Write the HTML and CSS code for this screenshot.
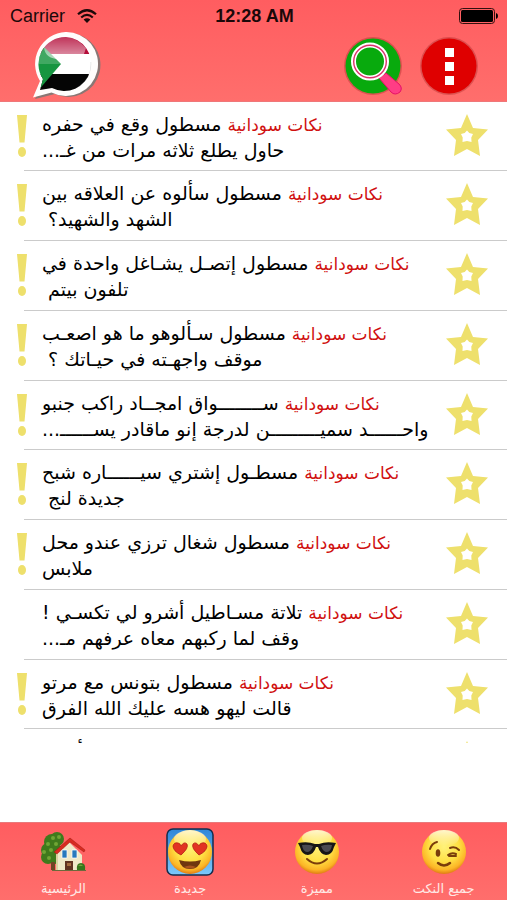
FILE: index.html
```html
<!DOCTYPE html>
<html lang="ar">
<head>
<meta charset="utf-8">
<meta name="viewport" content="width=device-width, initial-scale=1">
<title>نكات سودانية</title>
<link rel="stylesheet" href="styles.css">
</head>
<body>
<svg class="defs" aria-hidden="true">
  <defs>
    <radialGradient id="face" cx="50%" cy="38%" r="62%">
      <stop offset="0" stop-color="#fff27a"/><stop offset=".55" stop-color="#ffe044"/><stop offset=".85" stop-color="#fcb526"/><stop offset="1" stop-color="#e07b14"/>
    </radialGradient>
    <linearGradient id="shine" x1="0" y1="0" x2="0" y2="1">
      <stop offset="0" stop-color="#fff" stop-opacity=".75"/><stop offset="1" stop-color="#fff" stop-opacity="0"/>
    </linearGradient>
    <linearGradient id="sky" x1="0" y1="0" x2="0" y2="1">
      <stop offset="0" stop-color="#2f86d8"/><stop offset="1" stop-color="#7cc8fb"/>
    </linearGradient>
    <linearGradient id="gloss" x1="0" y1="0" x2="0" y2="1">
      <stop offset="0" stop-color="#fff" stop-opacity=".15"/><stop offset="1" stop-color="#fff" stop-opacity=".6"/>
    </linearGradient>
    <symbol id="star" viewBox="0 0 42 42">
      <path fill="#eee06c" fill-rule="evenodd" d="M21 0 27 14 42 15.500 32 26 34 42 21 35 8 42 10 26 0 15.500 15 14ZM21 16.500 18.700 19 15 20 16.700 23.500 16.500 28 21 27 25.500 28 25.300 23.500 27 20 23.300 19Z"/>
    </symbol>
    <symbol id="mark" viewBox="0 0 12 42">
      <path fill="#eee06c" d="M1 0H11L8.500 27.500H3.500Z"/><ellipse cx="6" cy="37" rx="4" ry="5" fill="#eee06c"/>
    </symbol>
  </defs>
</svg>
<div class="app">
  <header class="top">
    <div class="status">
      <div class="carrier">Carrier
        <svg width="20" height="14" viewBox="0 0 20 14" fill="none" stroke="#1b0809" stroke-width="2.200"><path d="M1 5.300Q10-2.800 19 5.300M4.200 8.500Q10 3.400 15.800 8.500"/><path fill="#1b0809" stroke="none" d="M6.600 10.500Q10 7.800 13.400 10.500L10 14Z"/></svg>
      </div>
      <div class="clock">12:28 AM</div>
      <svg class="battery" width="40" height="16" viewBox="0 0 40 16"><rect x=".5" y=".5" width="35" height="15" rx="3" fill="none" stroke="#32100f"/><rect x="2" y="2" width="32" height="12" rx="1.500"/><path d="M37 5q2 .5 2 3t-2 3z"/></svg>
    </div>
    <div class="actions">
      <button class="icon-button flag" aria-label="السودان">
        <svg width="72" height="68" viewBox="0 0 72 68">
          <clipPath id="flagclip"><path d="M34 5A27 27 0 1 1 20 56L8 58 11 47A27 27 0 0 1 34 5Z"/></clipPath>
          <path fill="#8a7774" d="M38 1a32 32 0 1 1-15 61L3 67 12 49A32 32 0 0 1 38 1Z"/>
          <path fill="#fffdfc" d="M33.500 0a32 32 0 1 1-14 60.500L1 65.500 8 49A32 32 0 0 1 33.500 0Z"/>
          <g clip-path="url(#flagclip)">
            <path fill="#fff" d="M0 0H72V68H0Z"/><path fill="#b40d3a" d="M0 0H72V22H0Z"/><path fill="#050505" d="M0 42H72V68H0Z"/><path fill="#169540" d="M5 8 29 32 5 60Z"/>
            <path fill="url(#gloss)" d="M12 14Q33-6 54 16L52 22H28L24 27Q12 25 12 14Z"/>
            <path fill="#fff" opacity=".18" d="M5 32H29L5 8Z"/>
            <path fill="none" stroke="#aaa" stroke-opacity=".35" stroke-width="3" d="M60 30Q61 47 47 56"/>
          </g>
        </svg>
      </button>
      <button class="icon-button search" aria-label="بحث">
        <svg width="62" height="62" viewBox="0 0 62 62">
          <circle cx="31" cy="31" r="29" fill="#8d1716" opacity=".3"/><circle cx="31" cy="31" r="27.500" fill="#08aa0d"/>
          <path fill="#ff3d85" stroke="#e61068" d="M37 43 44 38 57 49Q61 53 58 57 53 61 49 57Z"/>
          <circle cx="28" cy="26.500" r="16.500" fill="none" stroke="#fff" stroke-width="5"/><circle cx="28" cy="26.500" r="16.300" fill="none" stroke="#db316b" stroke-width="1.400"/>
        </svg>
      </button>
      <button class="icon-button menu" aria-label="القائمة">
        <svg width="60" height="62" viewBox="0 0 60 62"><circle cx="30" cy="31" r="29" fill="#8d1716" opacity=".3"/><circle cx="30" cy="31" r="27.500" fill="#df0000"/><path fill="#fff" d="M26 13h9v9h-9zM26 27h9v9h-9zM26 41h9v9h-9z"/></svg>
      </button>
    </div>
  </header>
  <main>
    <ul class="jokes">
      <li><svg class="mark"><use href="#mark"/></svg><div class="text"><p><b>نكات سودانية</b> مسطول وقع في حفره</p><p>حاول يطلع ثلاثه مرات من غـ...</p></div><button class="fav" aria-label="مفضلة"><svg class="star"><use href="#star"/></svg></button></li>
      <li><svg class="mark"><use href="#mark"/></svg><div class="text"><p><b>نكات سودانية</b> مسطول سألوه عن العلاقه بين</p><p>الشهد والشهيد؟&nbsp;</p></div><button class="fav" aria-label="مفضلة"><svg class="star"><use href="#star"/></svg></button></li>
      <li><svg class="mark"><use href="#mark"/></svg><div class="text"><p><b>نكات سودانية</b> مسطول إتصـل يشـاغل واحدة في</p><p>تلفون بيتم&nbsp;</p></div><button class="fav" aria-label="مفضلة"><svg class="star"><use href="#star"/></svg></button></li>
      <li><svg class="mark"><use href="#mark"/></svg><div class="text"><p><b>نكات سودانية</b> مسطول سـألوهو ما هو اصعـب</p><p>موقف واجهـته في حيـاتك ؟&nbsp;</p></div><button class="fav" aria-label="مفضلة"><svg class="star"><use href="#star"/></svg></button></li>
      <li><svg class="mark"><use href="#mark"/></svg><div class="text"><p><b>نكات سودانية</b> ســــــــواق امجــاد راكب جنبو</p><p>واحــــــد سميـــــــــن لدرجة إنو ماقادر يســــــ...</p></div><button class="fav" aria-label="مفضلة"><svg class="star"><use href="#star"/></svg></button></li>
      <li><svg class="mark"><use href="#mark"/></svg><div class="text"><p><b>نكات سودانية</b> مسطـول إشتري سيــــــاره شبح</p><p>جديدة لنج&nbsp;</p></div><button class="fav" aria-label="مفضلة"><svg class="star"><use href="#star"/></svg></button></li>
      <li><svg class="mark"><use href="#mark"/></svg><div class="text"><p><b>نكات سودانية</b> مسطول شغال ترزي عندو محل</p><p>ملابس</p></div><button class="fav" aria-label="مفضلة"><svg class="star"><use href="#star"/></svg></button></li>
      <li class="read"><svg class="mark"><use href="#mark"/></svg><div class="text"><p><b>نكات سودانية</b> تلاتة مسـاطيل أشرو لي تكسـي !</p><p>وقف لما ركبهم معاه عرفهم مـ...</p></div><button class="fav" aria-label="مفضلة"><svg class="star"><use href="#star"/></svg></button></li>
      <li><svg class="mark"><use href="#mark"/></svg><div class="text"><p><b>نكات سودانية</b> مسطول بتونس مع مرتو</p><p>قالت ليهو هسه عليك الله الفرق</p></div><button class="fav" aria-label="مفضلة"><svg class="star"><use href="#star"/></svg></button></li>
      <li class="read"><svg class="mark"><use href="#mark"/></svg><div class="text"><p><b>نكات سودانية</b> تلاتة أشرو</p></div><button class="fav" aria-label="مفضلة"><svg class="star"><use href="#star"/></svg></button></li>
    </ul>
  </main>
  <nav class="tabs">
    <a href="#home">
      <svg width="48" height="48" viewBox="0 0 48 48">
        <g fill="#3f7a1c"><circle cx="13" cy="14" r="8"/><circle cx="18" cy="11" r="7"/><circle cx="9" cy="22" r="7"/><circle cx="16" cy="26" r="10"/><circle cx="9" cy="29" r="7"/></g>
        <g fill="#70a535"><circle cx="14" cy="10" r="2"/><circle cx="20" cy="9" r="2"/><circle cx="9" cy="16" r="2"/><circle cx="17" cy="16" r="2"/><circle cx="5" cy="24" r="2"/><circle cx="12" cy="22" r="2"/><circle cx="10" cy="30" r="2"/></g>
        <path fill="#6f4425" d="M12 34h4v8h-4z"/><path fill="#efe9c8" d="M17 26 30 14 43 27V42H17Z"/><path fill="#d9cf9f" d="M17 26h2v16h-2z"/>
        <path fill="#d82b20" stroke="#9d1913" stroke-width=".5" d="M31 10 46 22 45 24 31 14 18 26 15 24Z"/>
        <path fill="#2779bd" stroke="#fff" stroke-width=".7" d="M23 22h5v8h-5zM33 22h5v8h-5z"/><path fill="#603321" d="M26 33h8v9h-8z"/><path fill="#a46c40" d="M28 35h4v3h-4z"/>
        <path fill="#37771d" d="M38 42Q37 35 42 35 47 35 46 42Z"/><path fill="#73a83b" d="M39 38q3-3 5 0z"/><path stroke="#6c6a3b" d="M13 42.500H47"/>
      </svg>
      <span>الرئيسية</span>
    </a>
    <a href="#new" aria-current="page">
      <svg width="48" height="48" viewBox="0 0 48 48"><rect x="1" y="1" width="46" height="46" rx="6" fill="url(#sky)" stroke="#142c4c" stroke-width="1.500"/><circle cx="24" cy="24" r="22" fill="url(#face)"/><ellipse cx="24" cy="11" rx="16" ry="9" fill="url(#shine)"/>
        <path fill="#e23322" stroke="#b51e15" stroke-width=".8" d="M15 27Q7 23 7 18 8 14 12 15 14 15 15 18 18 13 21 16 23 20 15 27Z"/><path fill="#e23322" stroke="#b51e15" stroke-width=".8" d="M33 27Q41 23 41 18 40 14 36 15 34 15 33 18 30 13 27 16 25 20 33 27Z"/><path fill="#70370f" d="M13 32Q24 35 35 32 33 41 24 41 15 41 13 32Z"/><path fill="#a9531f" d="M18 39Q24 36 30 39 24 42 18 39Z"/></svg>
      <span>جديدة</span>
    </a>
    <a href="#featured">
      <svg width="48" height="48" viewBox="0 0 48 48"><circle cx="24" cy="24" r="22" fill="url(#face)"/><ellipse cx="24" cy="10" rx="15" ry="8" fill="url(#shine)"/><path fill="#161616" d="M5 15Q15 13 22 16H26Q33 13 43 15L41 19Q39 27 33 27 27 26 25 19H23Q21 26 15 27 9 27 7 19Z"/><path fill="#4a4a50" d="M9 17Q15 16 20 18 18 24 14 24 10 24 9 17ZM28 18Q33 16 39 17 38 24 34 24 30 24 28 18Z"/><path fill="none" stroke="#7a3d0b" stroke-width="2" stroke-linecap="round" d="M14 31Q24 40 34 31"/></svg>
      <span>مميزة</span>
    </a>
    <a href="#all">
      <svg width="48" height="48" viewBox="0 0 48 48"><circle cx="24" cy="24" r="22" fill="url(#face)"/><ellipse cx="24" cy="10" rx="15" ry="8" fill="url(#shine)"/><ellipse cx="18" cy="25" rx="2.300" ry="3.800" fill="#7a3d0b"/><g fill="none" stroke="#7a3d0b" stroke-width="2" stroke-linecap="round"><path d="M10 21Q12 15 17 14M30 20Q35 18 39 22M28 27Q32 24 36 26M29 28H36"/><path d="M18 35Q24 40 30 35" stroke-width="2.500"/></g></svg>
      <span>جميع النكت</span>
    </a>
  </nav>
</div>
</body>
</html>
```
FILE: styles.css
```css
* {
  box-sizing: border-box;
}

body {
  margin: 0;
  background: #fff;
  color: #000;
  font-family: "DejaVu Sans", sans-serif;
}

.defs {
  position: absolute;
  width: 0;
  height: 0;
}

.app {
  display: flex;
  flex-direction: column;
  height: 100vh;
}

.top {
  flex: none;
  padding: 6px 8px 1px 10px;
  background: linear-gradient(#ff5d60, #ff6e6c);
  border-bottom: 1px solid #ef7779;
}

.status {
  display: grid;
  grid-template-columns: 1fr auto 1fr;
  align-items: center;
  height: 20px;
  font: 18px/20px "Liberation Sans", sans-serif;
  color: #1b0809;
}

.carrier {
  display: flex;
  align-items: center;
  gap: 12px;
}

.clock {
  font-weight: bold;
}

.battery {
  justify-self: end;
}

.actions {
  display: flex;
  align-items: center;
  gap: 15px;
  padding: 6px 20px 0 22px;
}

.icon-button,
.fav {
  display: block;
  padding: 0;
  border: 0;
  background: none;
}

.icon-button svg,
.fav svg {
  display: block;
}

.flag {
  margin-right: auto;
}

main {
  flex: 1;
  min-height: 0;
  padding-bottom: 79px;
}

.jokes {
  height: 100%;
  margin: 0;
  padding: 0;
  overflow: hidden;
  list-style: none;
}

.jokes li {
  display: flex;
  align-items: flex-start;
  height: 70px;
  padding: 9px 19px 0 16px;
  background: linear-gradient(#cbcbcb, #cbcbcb) 24px 100% / 100% 1px no-repeat;
}

.jokes li:nth-child(4n + 1) {
  height: 69px;
}

.mark {
  flex: none;
  width: 12px;
  height: 42px;
  margin-top: 4px;
}

.read .mark {
  visibility: hidden;
}

.text {
  flex: 1;
  min-width: 0;
  padding-left: 14px;
  direction: rtl;
  text-align: left;
  white-space: nowrap;
}

.text p {
  height: 26px;
  margin: 0;
  font-size: 19px;
  line-height: 26px;
}

.text b {
  color: #d0100f;
  font-size: 17px;
  font-weight: normal;
}

.fav {
  margin-top: 3px;
}

.star {
  width: 42px;
  height: 42px;
}

.tabs {
  flex: none;
  display: grid;
  grid-template-columns: repeat(4, 1fr);
  height: 78px;
  padding-top: 5px;
  background: linear-gradient(#ff5d60, #ff6e6c);
  border-top: 1px solid #e9797b;
}

.tabs a {
  display: flex;
  flex-direction: column;
  align-items: center;
  gap: 5px;
  color: #ffe9e6;
  font-size: 13px;
  line-height: 16px;
  text-decoration: none;
}
```
